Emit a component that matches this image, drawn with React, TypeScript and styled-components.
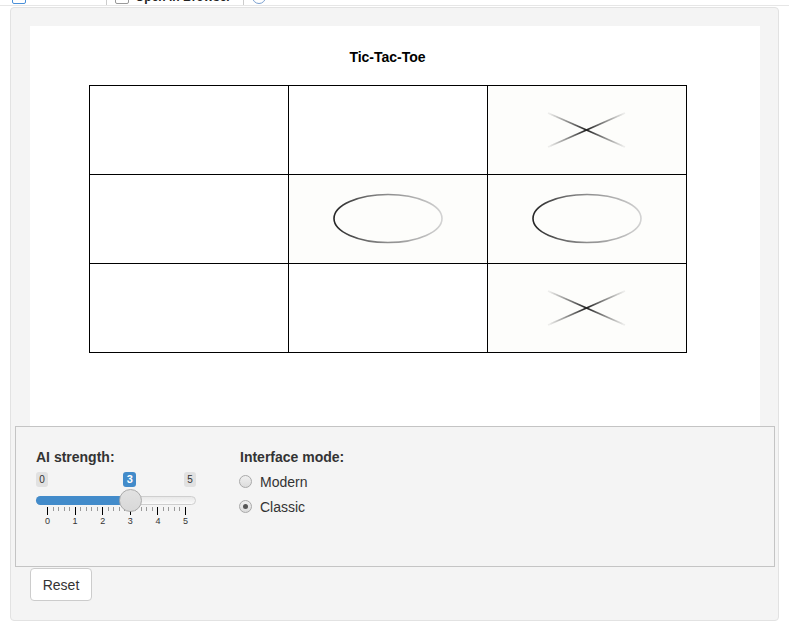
import React from "react";
import styled, { createGlobalStyle } from "styled-components";

const Global = createGlobalStyle`
  html, body { margin: 0; padding: 0; background: #ffffff; }
  body { font-family: "Liberation Sans", Arial, Helvetica, sans-serif; color: #333; font-size: 14px; }
  * { box-sizing: border-box; }
`;

const Toolbar = styled.div`
  height: 6px;
  overflow: hidden;
  border-bottom: 1px solid #e6e6e6;
  display: flex;
  align-items: flex-start;
  background: #fff;
`;

const ToolItem = styled.div<{ $left: number }>`
  margin-left: ${(p) => p.$left}px;
  margin-top: -11px;
  height: 16px;
  line-height: 16px;
  font-size: 12px;
  font-weight: bold;
  color: #222;
  display: flex;
  align-items: center;
  gap: 6px;
`;

const ToolSep = styled.div`
  width: 1px;
  height: 16px;
  background: #ccc;
`;

const ToolIcon = styled.div<{ $round?: boolean; $color?: string }>`
  width: 14px;
  height: 14px;
  border: 1px solid ${(p) => p.$color || "#999"};
  border-radius: ${(p) => (p.$round ? "50%" : "2px")};
`;

const Page = styled.div`
  padding: 0 10px;
`;

const Panel = styled.div`
  margin-top: 1px;
  background: #f4f4f4;
  border: 1px solid #e2e2e2;
  border-radius: 4px;
  padding: 18px 18px 19px 19px;
`;

const PlotArea = styled.div`
  background: #ffffff;
  height: 400px;
  padding-top: 22px;
  display: flex;
  flex-direction: column;
`;

const Title = styled.div`
  font-weight: bold;
  font-size: 14px;
  line-height: 18px;
  color: #000;
  text-align: center;
  width: 715px;
`;

const Board = styled.div`
  margin-top: 19px;
  margin-left: 59px;
  width: 598px;
  display: grid;
  grid-template-columns: repeat(3, 199px);
  grid-template-rows: repeat(3, 89px);
  border-left: 1px solid #000;
  border-top: 1px solid #000;
`;

const Cell = styled.div<{ $filled: boolean }>`
  border-right: 1px solid #000;
  border-bottom: 1px solid #000;
  background: ${(p) => (p.$filled ? "#fdfdfb" : "#ffffff")};
  display: flex;
  align-items: center;
  justify-content: center;
`;

const Well = styled.div`
  margin: 0 -15px;
  height: 141px;
  background: #f4f4f4;
  border: 1px solid #c4c4c4;
  padding: 20px 20px;
  display: flex;
  gap: 44px;
`;

const Group = styled.div<{ $width?: number }>`
  display: flex;
  flex-direction: column;
  width: ${(p) => (p.$width ? `${p.$width}px` : "auto")};
`;

const Label = styled.div<{ $gap: number }>`
  font-weight: bold;
  font-size: 14px;
  line-height: 20px;
  color: #333;
  margin-bottom: ${(p) => p.$gap}px;
`;

const SliderBox = styled.div`
  position: relative;
  width: 160px;
  height: 56px;
`;

const Badge = styled.div<{ $active?: boolean }>`
  position: absolute;
  top: 0;
  height: 15px;
  min-width: 12px;
  padding: 0 3px;
  border-radius: 3px;
  line-height: 15px;
  text-align: center;
  background: ${(p) => (p.$active ? "#428bca" : "#e1e1e1")};
  color: ${(p) => (p.$active ? "#fff" : "#333")};
  font-weight: ${(p) => (p.$active ? "bold" : "normal")};
  font-size: ${(p) => (p.$active ? "11px" : "10px")};
`;

const Track = styled.div`
  position: absolute;
  top: 24px;
  left: 0;
  width: 160px;
  height: 9px;
  border-radius: 5px;
  border: 1px solid #cfcfcf;
  background: linear-gradient(#e8e8e8, #fafafa);
`;

const Fill = styled.div`
  position: absolute;
  top: 24px;
  left: 0;
  height: 9px;
  border-radius: 5px 0 0 5px;
  background: #428bca;
`;

const Handle = styled.div`
  position: absolute;
  top: 17px;
  width: 23px;
  height: 23px;
  border-radius: 50%;
  background: linear-gradient(#e2e2e2, #d8d8d8);
  border: 1px solid #ababab;
`;

const Tick = styled.div<{ $major: boolean }>`
  position: absolute;
  top: 35px;
  width: 1px;
  height: ${(p) => (p.$major ? 8 : 4)}px;
  background: ${(p) => (p.$major ? "#000" : "#999")};
`;

const TickLabel = styled.div`
  position: absolute;
  top: 44px;
  width: 12px;
  margin-left: -6px;
  text-align: center;
  font-size: 9px;
  line-height: 11px;
  color: #333;
`;

const RadioRow = styled.label`
  display: flex;
  align-items: center;
  height: 25px;
  gap: 8px;
  font-size: 14px;
  color: #333;
`;

const RadioDot = styled.span<{ $checked: boolean }>`
  width: 13px;
  height: 13px;
  margin-left: -1px;
  border-radius: 50%;
  border: 1px solid #a9a9a9;
  background: linear-gradient(#f0f0f0, #dcdcdc);
  display: flex;
  align-items: center;
  justify-content: center;
  &::after {
    content: "";
    width: 5px;
    height: 5px;
    border-radius: 50%;
    background: ${(p) => (p.$checked ? "#555" : "transparent")};
  }
`;

const ResetButton = styled.button`
  margin-top: 1px;
  width: 62px;
  height: 33px;
  background: #fff;
  border: 1px solid #cccccc;
  border-radius: 4px;
  font-family: "Liberation Sans", Arial, sans-serif;
  font-size: 14px;
  color: #333;
  padding: 0;
`;

const XMark: React.FC<{ id: string }> = ({ id }) => (
  <svg width="198" height="88" viewBox="0 0 198 88">
    <defs>
      <linearGradient id={id} gradientUnits="userSpaceOnUse" x1="60" y1="0" x2="137" y2="0">
        <stop offset="0" stopColor="#333" stopOpacity="0.05" />
        <stop offset="0.5" stopColor="#222" stopOpacity="1" />
        <stop offset="1" stopColor="#333" stopOpacity="0.05" />
      </linearGradient>
      <filter id={id + "b"}>
        <feGaussianBlur stdDeviation="0.4" />
      </filter>
    </defs>
    <g stroke={`url(#${id})`} strokeWidth="1.7" filter={`url(#${id}b)`}>
      <line x1="60" y1="27" x2="137" y2="61" />
      <line x1="60" y1="61" x2="137" y2="27" />
    </g>
  </svg>
);

const OMark: React.FC<{ id: string }> = ({ id }) => (
  <svg width="198" height="88" viewBox="0 0 198 88">
    <defs>
      <linearGradient id={id} gradientUnits="userSpaceOnUse" x1="44" y1="0" x2="154" y2="0">
        <stop offset="0" stopColor="#222" />
        <stop offset="0.35" stopColor="#777" />
        <stop offset="1" stopColor="#d4d4d4" />
      </linearGradient>
      <filter id={id + "b"}>
        <feGaussianBlur stdDeviation="0.4" />
      </filter>
    </defs>
    <ellipse cx="99" cy="43.5" rx="54" ry="24" fill="none" stroke={`url(#${id})`} strokeWidth="1.6" filter={`url(#${id}b)`} />
  </svg>
);

const board: ("" | "X" | "O")[] = ["", "", "X", "", "O", "O", "", "", "X"];

const MIN = 0;
const MAX = 5;
const VALUE = 3;
const GRID_L = 11;
const GRID_W = 138;

export default function App() {
  const pos = (v: number) => GRID_L + ((v - MIN) / (MAX - MIN)) * GRID_W;
  const ticks: { x: number; major: boolean }[] = [];
  for (let j = 0; j <= 25; j++) ticks.push({ x: GRID_L + (j / 25) * GRID_W, major: j % 5 === 0 });

  return (
    <>
      <Global />
      <Toolbar>
        <ToolItem $left={12}>
          <ToolIcon $color="#4a90d9" />
        </ToolItem>
        <ToolItem $left={80}>
          <ToolSep />
        </ToolItem>
        <ToolItem $left={8}>
          <ToolIcon />
          <span>Open in Browser</span>
        </ToolItem>
        <ToolItem $left={12}>
          <ToolSep />
        </ToolItem>
        <ToolItem $left={8}>
          <ToolIcon $round $color="#7aa0d0" />
        </ToolItem>
      </Toolbar>
      <Page>
        <Panel>
          <PlotArea>
            <Title>Tic-Tac-Toe</Title>
            <Board>
              {board.map((c, i) => (
                <Cell key={i} $filled={c !== ""}>
                  {c === "X" && <XMark id={`xg${i}`} />}
                  {c === "O" && <OMark id={`og${i}`} />}
                </Cell>
              ))}
            </Board>
          </PlotArea>
          <Well>
            <Group $width={160}>
              <Label $gap={5}>AI strength:</Label>
              <SliderBox>
                <Track />
                <Fill style={{ width: pos(VALUE) }} />
                {ticks.map((t, i) => (
                  <Tick key={i} $major={t.major} style={{ left: t.x }} />
                ))}
                {[0, 1, 2, 3, 4, 5].map((v) => (
                  <TickLabel key={v} style={{ left: pos(v) + 0.5 }}>
                    {v}
                  </TickLabel>
                ))}
                <Badge style={{ left: 0 }}>{MIN}</Badge>
                <Badge style={{ right: 0 }}>{MAX}</Badge>
                <Badge $active style={{ left: pos(VALUE) - 6.5, minWidth: 13 }}>
                  {VALUE}
                </Badge>
                <Handle style={{ left: pos(VALUE) - 11 }} />
              </SliderBox>
            </Group>
            <Group>
              <Label $gap={2}>Interface mode:</Label>
              <RadioRow>
                <RadioDot $checked={false} />
                Modern
              </RadioRow>
              <RadioRow>
                <RadioDot $checked />
                Classic
              </RadioRow>
            </Group>
          </Well>
          <ResetButton>Reset</ResetButton>
        </Panel>
      </Page>
    </>
  );
}
